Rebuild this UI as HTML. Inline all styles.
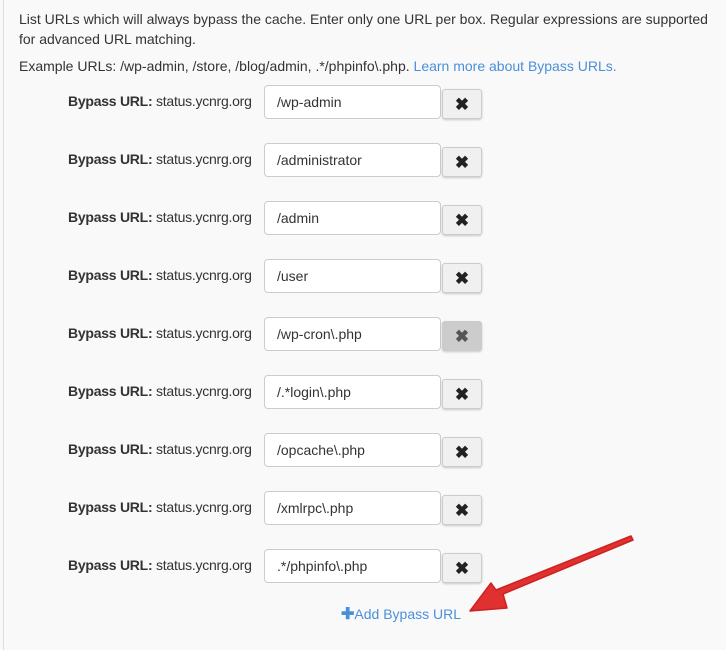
<!DOCTYPE html><html><head><style>
body{margin:0;width:726px;height:650px;background:#f9f9f9;font-family:"Liberation Sans",sans-serif;font-size:14px;color:#333;position:relative;overflow:hidden}
.bl{position:absolute;left:3px;top:0;width:1px;height:650px;background:#ddd}
p{position:absolute;left:19px;margin:0;line-height:20px}
a{color:#4a90d9;text-decoration:none}
.row{position:absolute;left:0;width:726px;height:34px}
.lab{position:absolute;left:68px;top:8px;letter-spacing:-0.25px}
.lab b{font-weight:bold}
.in{position:absolute;left:264px;top:0;width:163px;height:32px;border:1px solid #ccc;border-radius:4px;background:#fff;padding-left:12px;line-height:32px;box-sizing:content-box}
.btn{position:absolute;left:442px;top:4px;width:38px;height:28px;border:1px solid #ccc;border-radius:3px;background:#f0f0f0;box-shadow:0 1px 2px rgba(0,0,0,.2);text-align:center;line-height:30px;font-weight:bold;font-size:17px;color:#222}
.btn.h{background:#ccc;color:#555}
</style></head><body><div class="bl"></div>
<p style="top:9px">List URLs which will always bypass the cache. Enter only one URL per box. Regular expressions are supported<br>for advanced URL matching.</p>
<p style="top:56px">Example URLs: /wp-admin, /store, /blog/admin, .*/phpinfo\.php. <a>Learn more about Bypass URLs.</a></p>
<div class="row" style="top:85px"><span class="lab"><b>Bypass URL:</b> status.ycnrg.org</span><div class="in">/wp-admin</div><div class="btn">✖</div></div>
<div class="row" style="top:143px"><span class="lab"><b>Bypass URL:</b> status.ycnrg.org</span><div class="in">/administrator</div><div class="btn">✖</div></div>
<div class="row" style="top:201px"><span class="lab"><b>Bypass URL:</b> status.ycnrg.org</span><div class="in">/admin</div><div class="btn">✖</div></div>
<div class="row" style="top:259px"><span class="lab"><b>Bypass URL:</b> status.ycnrg.org</span><div class="in">/user</div><div class="btn">✖</div></div>
<div class="row" style="top:317px"><span class="lab"><b>Bypass URL:</b> status.ycnrg.org</span><div class="in">/wp-cron\.php</div><div class="btn h">✖</div></div>
<div class="row" style="top:375px"><span class="lab"><b>Bypass URL:</b> status.ycnrg.org</span><div class="in">/.*login\.php</div><div class="btn">✖</div></div>
<div class="row" style="top:433px"><span class="lab"><b>Bypass URL:</b> status.ycnrg.org</span><div class="in">/opcache\.php</div><div class="btn">✖</div></div>
<div class="row" style="top:491px"><span class="lab"><b>Bypass URL:</b> status.ycnrg.org</span><div class="in">/xmlrpc\.php</div><div class="btn">✖</div></div>
<div class="row" style="top:549px"><span class="lab"><b>Bypass URL:</b> status.ycnrg.org</span><div class="in">.*/phpinfo\.php</div><div class="btn">✖</div></div>
<p style="top:604px;left:341px"><a><b style="font-size:16px">✚</b>Add Bypass URL</a></p>
<svg style="position:absolute;left:0;top:0" width="726" height="650"><polygon points="631,536 633,540 503,594 507,608 470,611 491,583 496,590" fill="#e03030" stroke="#c22" stroke-width="1.5" stroke-linejoin="round"/></svg>
</body></html>
